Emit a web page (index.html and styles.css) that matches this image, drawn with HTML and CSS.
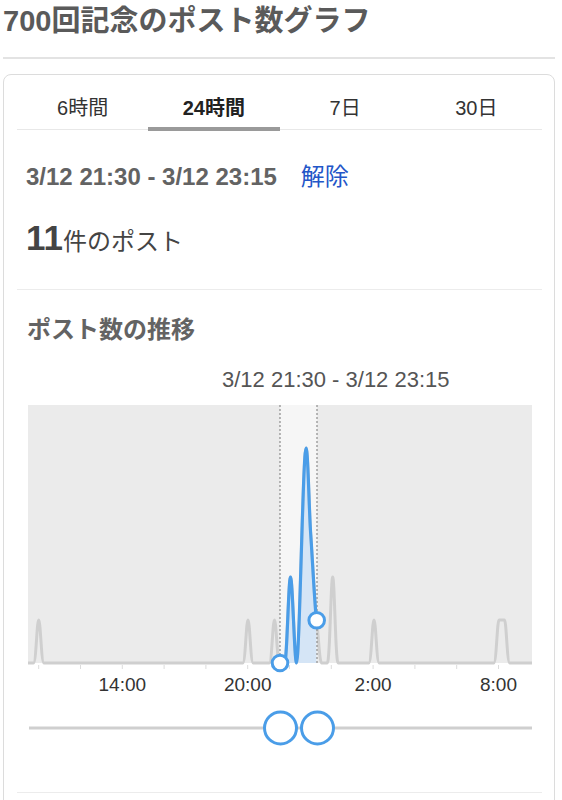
FILE: index.html
```html
<!DOCTYPE html>
<html lang="ja">
<head>
<meta charset="utf-8">
<title>700回記念のポスト数グラフ</title>
<link rel="stylesheet" href="styles.css">
</head>
<body>
<div class="page">
  <h1 class="title">700回記念のポスト数グラフ</h1>
  <div class="rule"></div>
  <section class="card">
    <nav class="tabs">
      <div class="tab">6時間</div>
      <div class="tab active">24時間</div>
      <div class="tab">7日</div>
      <div class="tab">30日</div>
    </nav>
    <div class="summary">
      <div class="range"><span class="range-text">3/12 21:30 - 3/12 23:15</span><a class="clear" href="#">解除</a></div>
      <div class="count"><span class="num">11</span>件のポスト</div>
    </div>
    <div class="trend">
      <h2 class="trend-title">ポスト数の推移</h2>
      <svg class="chart" width="524" height="445" viewBox="17 347 524 445" xmlns="http://www.w3.org/2000/svg">
        <text class="chart-label" x="222" y="387">3/12 21:30 - 3/12 23:15</text>
        <rect x="28" y="405" width="504" height="258" fill="#ebebeb"/>
        <rect x="280" y="405" width="37" height="258" fill="#f6f6f6"/>
        <g stroke="#dcdcdc" stroke-width="1">
          <line x1="38.7" y1="665" x2="38.7" y2="669"/>
          <line x1="80.5" y1="665" x2="80.5" y2="669"/>
          <line x1="122.3" y1="665" x2="122.3" y2="669"/>
          <line x1="164.1" y1="665" x2="164.1" y2="669"/>
          <line x1="205.9" y1="665" x2="205.9" y2="669"/>
          <line x1="247.7" y1="665" x2="247.7" y2="669"/>
          <line x1="289.5" y1="665" x2="289.5" y2="669"/>
          <line x1="331.3" y1="665" x2="331.3" y2="669"/>
          <line x1="373.1" y1="665" x2="373.1" y2="669"/>
          <line x1="414.9" y1="665" x2="414.9" y2="669"/>
          <line x1="456.7" y1="665" x2="456.7" y2="669"/>
          <line x1="498.5" y1="665" x2="498.5" y2="669"/>
        </g>
        <path d="M279.4,663 L284.6,663 C287,663 288.5,577 290.5,577 C292.5,577 294.5,663 296.5,663 C299.5,663 303,448 306,448 C308,448 309,510 310.7,534 C312.5,560 315,610 316.5,620 L316.5,663 Z" fill="#d5e5f6"/>
        <path d="M28,663 L33.5,663 C36.1,663 36.9,620 38.7,620 C40.5,620 41.3,663 43.9,663 L242.8,663 C245.4,663 246.2,620 248,620 C249.8,620 250.6,663 253.2,663 L269.3,663 C271.9,663 272.7,620 274.5,620 C276.3,620 277.1,663 279.7,663 L284.6,663 C287,663 288.5,577 290.5,577 C292.5,577 294.5,663 296.5,663 C299.5,663 303,448 306,448 C308,448 309,510 310.7,534 C312.5,560 315,610 316.5,620 C318,628 319.5,663 321.5,663 L327.3,663 C329.9,663 330.9,577 332.7,577 C334.5,577 335.5,663 338.1,663 L368.8,663 C371.4,663 372.2,620 374,620 C375.8,620 376.6,663 379.2,663 L493.8,663 C496.4,663 497.2,620 499,620 L504.5,620 C506.3,620 507.1,663 509.7,663 L532,663" fill="none" stroke="#cfcfcf" stroke-width="3" stroke-linejoin="round"/>
        <g stroke="#8c8c8c" stroke-width="1.2" stroke-dasharray="2 2">
          <line x1="280" y1="405" x2="280" y2="663"/>
          <line x1="317" y1="405" x2="317" y2="663"/>
        </g>
        <path d="M279.4,663 L284.6,663 C287,663 288.5,577 290.5,577 C292.5,577 294.5,663 296.5,663 C299.5,663 303,448 306,448 C308,448 309,510 310.7,534 C312.5,560 315,610 316.5,620" fill="none" stroke="#4a9de8" stroke-width="3.2" stroke-linejoin="round" stroke-linecap="round"/>
        <circle cx="280" cy="663" r="7.8" fill="#fff" stroke="#4a9de8" stroke-width="3"/>
        <circle cx="316.7" cy="620.3" r="7.8" fill="#fff" stroke="#4a9de8" stroke-width="3"/>
        <g class="axis-label" text-anchor="middle">
          <text x="122.3" y="691">14:00</text>
          <text x="247.7" y="691">20:00</text>
          <text x="373.1" y="691">2:00</text>
          <text x="498.5" y="691">8:00</text>
        </g>
        <line x1="29" y1="728" x2="532" y2="728" stroke="#cfcfcf" stroke-width="3"/>
        <circle cx="280.5" cy="728" r="16" fill="#fff" stroke="#4a9de8" stroke-width="3"/>
        <circle cx="317.5" cy="728" r="16" fill="#fff" stroke="#4a9de8" stroke-width="3"/>
      </svg>
    </div>
    <div class="divider"></div>
    <div class="below"></div>
  </section>
</div>
</body>
</html>
```

FILE: styles.css
```css
* { box-sizing: border-box; }

html, body {
  margin: 0;
  padding: 0;
  background: #fff;
}

body {
  font-family: "Liberation Sans", "Noto Sans CJK JP", sans-serif;
  color: #333;
}

.page {
  width: 562px;
  padding: 0 7px 0 3px;
}

.title {
  margin: 0;
  font-size: 29px;
  line-height: 42px;
  font-weight: bold;
  color: #5a5a5a;
  white-space: nowrap;
}

.rule {
  margin-top: 15px;
  height: 2px;
  background: #e3e3e3;
}

.card {
  margin-top: 15px;
  border: 1px solid #dcdcdc;
  border-radius: 8px;
  padding: 0 12px 40px 13px;
}

.tabs {
  display: grid;
  grid-template-columns: repeat(4, 1fr);
  border-bottom: 1px solid #e8e8e8;
}

.tab {
  position: relative;
  height: 54px;
  padding-top: 8px;
  display: flex;
  align-items: center;
  justify-content: center;
  font-size: 20px;
  color: #333;
}

.tab.active {
  font-weight: bold;
  color: #222;
}

.tab.active::after {
  content: "";
  position: absolute;
  left: 0;
  right: 0;
  bottom: -2px;
  height: 4px;
  background: #9a9a9a;
}

.summary {
  padding: 31px 10px 29px 9px;
  border-bottom: 1px solid #ececec;
}

.range {
  font-size: 24px;
  line-height: 32px;
  white-space: nowrap;
}

.range-text {
  font-weight: bold;
  color: #636363;
}

.clear {
  margin-left: 24px;
  color: #2356c8;
  text-decoration: none;
}

.count {
  margin-top: 23px;
  height: 44px;
  font-size: 24px;
  line-height: 44px;
  color: #444;
}

.count .num {
  font-size: 35px;
  font-weight: bold;
}

.trend {
  padding-top: 23px;
}

.trend-title {
  margin: 0;
  padding-left: 10px;
  font-size: 24px;
  line-height: 34px;
  font-weight: bold;
  color: #636363;
}

.chart {
  display: block;
}

.chart-label {
  font-family: "Liberation Sans", sans-serif;
  font-size: 22px;
  fill: #555;
}

.axis-label {
  font-family: "Liberation Sans", sans-serif;
  font-size: 19px;
  fill: #333;
}

.divider {
  height: 1px;
  background: #ececec;
}

.below {
  height: 60px;
}
```
